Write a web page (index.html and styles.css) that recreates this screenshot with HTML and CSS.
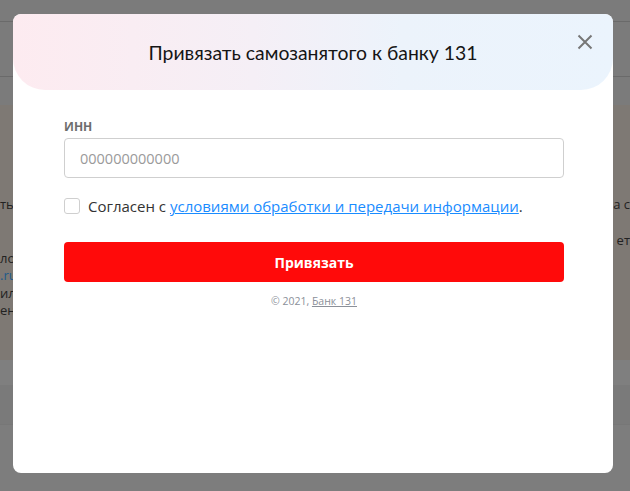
FILE: index.html
```html
<!DOCTYPE html>
<html lang="ru">
<head>
<meta charset="utf-8">
<title>Привязать самозанятого к банку 131</title>
<link rel="stylesheet" href="styles.css">
</head>
<body>
<div class="page">
  <div class="bar bar-top"></div>
  <div class="bar bar-nav"></div>
  <div class="bar bar-sub"></div>
  <section class="content">
    <div class="line line-1"><span>ться</span><span>а с</span></div>
    <div class="line line-2"><span></span><span>ет</span></div>
    <div class="line line-3"><span>лог</span><span></span></div>
    <div class="line line-4"><span class="blue">.ru</span><span></span></div>
    <div class="line line-5"><span>ило</span><span></span></div>
    <div class="line line-6"><span>енн</span><span></span></div>
  </section>
  <div class="band band-a"></div>
  <div class="band band-b"></div>
  <div class="band band-c"></div>
</div>

<div class="modal">
  <header class="modal-head">
    <h1 class="modal-title">Привязать самозанятого к банку 131</h1>
    <button class="close" aria-label="Закрыть">
      <svg width="16" height="16" viewBox="0 0 16 16"><path d="M1.5 1.5 L14.5 14.5 M14.5 1.5 L1.5 14.5" stroke="#777" stroke-width="2" fill="none"/></svg>
    </button>
  </header>
  <form class="modal-body">
    <label class="field-label" for="inn">ИНН</label>
    <input class="field" id="inn" type="text" placeholder="000000000000">
    <label class="agree">
      <span class="check"></span>
      <span class="agree-text">Согласен с <a href="#">условиями обработки и передачи информации</a>.</span>
    </label>
    <button class="submit" type="button">Привязать</button>
    <p class="copy">© 2021, <a href="#">Банк 131</a></p>
  </form>
</div>
</body>
</html>
```
FILE: styles.css
```css
* { box-sizing: border-box; }
html, body { margin: 0; padding: 0; }
body {
  width: 630px;
  height: 491px;
  overflow: hidden;
  background: #7c7c7c;
  font-family: "Open Sans", "Noto Sans", sans-serif;
}
.page { display: flex; flex-direction: column; }
.bar-top { height: 22px; border-bottom: 1px solid #6a6a6a; background: #7b7b7b; }
.bar-nav { height: 55px; border-bottom: 1px solid #6a6a6a; background: #7b7b7b; }
.bar-sub { height: 28px; background: #7b7b7b; }
.content {
  height: 255px;
  background: #7e7974;
  padding-top: 91px;
  font-size: 13px;
  color: #222;
}
.line { display: flex; justify-content: space-between; height: 17.5px; line-height: 17.5px; }
.line-1 { margin-bottom: 18.5px; }
.blue { color: #1f5a8a; }
.band-a { height: 25px; background: #7f7f7f; }
.band-b { height: 40px; background: #7a7a7a; border-bottom: 1px solid #777; }
.band-c { height: 66px; background: #7d7d7d; }

.modal {
  position: absolute;
  left: 13px;
  top: 14px;
  width: 600px;
  height: 459px;
  background: #fff;
  border-radius: 8px;
  overflow: hidden;
}
.modal-head {
  position: relative;
  height: 76px;
  display: flex;
  align-items: center;
  justify-content: center;
  background: linear-gradient(90deg, #fdebf0 0%, #f5eff6 40%, #ecf3fb 65%, #ebf4fd 100%);
  border-radius: 8px 8px 32px 32px;
}
.modal-title {
  margin: 0;
  font-family: "Lato", "Noto Sans", sans-serif;
  font-weight: 400;
  font-size: 19.4px;
  color: #151515;
}
.close {
  position: absolute;
  right: 20px;
  top: 20px;
  width: 16px;
  height: 16px;
  padding: 0;
  border: 0;
  background: none;
  display: flex;
}
.modal-body {
  width: 500px;
  margin-left: 51px;
  padding-top: 29px;
  display: flex;
  flex-direction: column;
}
.field-label {
  font-size: 12px;
  font-weight: 700;
  color: #6d6d6d;
  line-height: 16px;
  height: 16px;
}
.field {
  margin-top: 3px;
  height: 40px;
  border: 1px solid #cfcfcf;
  border-radius: 4px;
  padding: 0 15px;
  font-family: inherit;
  font-size: 14.5px;
  color: #333;
}
.field::placeholder { color: #9a9a9a; }
.agree {
  margin-top: 20px;
  display: flex;
  align-items: center;
  gap: 8px;
  height: 16px;
}
.check {
  width: 16px;
  height: 16px;
  border: 1px solid #cfcfcf;
  border-radius: 3px;
  flex: none;
}
.agree-text { font-size: 15px; color: #333; white-space: nowrap; }
.agree-text a { color: #1a8cff; text-decoration: underline; }
.submit {
  margin-top: 28px;
  height: 40px;
  border: 0;
  border-radius: 4px;
  background: #ff0a0a;
  color: #fff;
  font-family: inherit;
  font-weight: 700;
  font-size: 14px;
}
.copy {
  margin: 12px 0 0;
  text-align: center;
  font-size: 10.5px;
  color: #8b9099;
}
.copy a { color: #8b9099; text-decoration: underline; }
```
